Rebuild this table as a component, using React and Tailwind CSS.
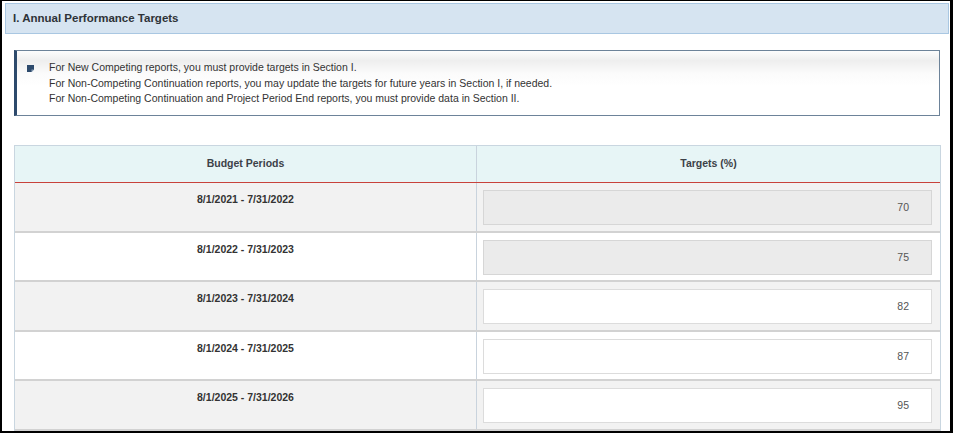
import React from 'react';

const rows = [
  { period: '8/1/2021 - 7/31/2022', target: '70', locked: true, shaded: true, h: 'h-[50px]' },
  { period: '8/1/2022 - 7/31/2023', target: '75', locked: true, shaded: false, h: 'h-[49px]' },
  { period: '8/1/2023 - 7/31/2024', target: '82', locked: false, shaded: true, h: 'h-[50px]' },
  { period: '8/1/2024 - 7/31/2025', target: '87', locked: false, shaded: false, h: 'h-[49px]' },
  { period: '8/1/2025 - 7/31/2026', target: '95', locked: false, shaded: true, h: 'h-[50px]' }
];

const notes = [
  'For New Competing reports, you must provide targets in Section I.',
  'For Non-Competing Continuation reports, you may update the targets for future years in Section I, if needed.',
  'For Non-Competing Continuation and Project Period End reports, you must provide data in Section II.'
];

const NoteIcon = () => (
  <svg width="7" height="7" viewBox="0 0 7 7" className="mt-[5px] shrink-0">
    <path d="M0 0H7V4.5L4.5 7H0Z" fill="#2d4a6c" />
    <path d="M4.5 7V4.5H7Z" fill="#8ea3ba" />
  </svg>
);

export default function App() {
  return (
    <div
      className="w-[953px] h-[433px] overflow-hidden bg-white border-black border-l-2 border-t border-r-[3px] border-b-2 pl-[3px] pt-[2px] pr-[1px]"
      style={{ fontFamily: '"Liberation Sans", Arial, sans-serif' }}
    >
      {/* Section header */}
      <div className="h-[31px] flex items-center bg-[#d6e4f1] border border-[#a9c7e2] pl-[7px]">
        <span className="text-[11.5px] font-bold text-[#2e3338]">I. Annual Performance Targets</span>
      </div>

      <div className="pl-[9px] pr-[8px]">
        {/* Instructions */}
        <div className="mt-[16px] mr-[1px] h-[66px] border border-[#6d8399] border-l-[3px] border-l-[#2d4a6c] bg-[linear-gradient(to_bottom,#fdfdfd_0%,#eeeeee_15%,#fbfbfb_35%,#ffffff_55%)] pl-[10px] pt-[9px] flex">
          <NoteIcon />
          <div className="ml-[15px] text-[10.5px] leading-[15.5px] text-[#333]">
            {notes.map((n) => (
              <div key={n}>{n}</div>
            ))}
          </div>
        </div>

        {/* Targets table */}
        <div className="mt-[29px] border-l border-r border-t border-[#c9d6e0]">
          <div className="flex h-[37px] bg-[#e7f5f6] border-b border-[#c8423b] text-[10.5px] font-bold text-[#3c4148]">
            <div className="w-[462px] flex items-center justify-center border-r border-[#c9d3dd]">Budget Periods</div>
            <div className="flex-1 flex items-center justify-center">Targets (%)</div>
          </div>

          {rows.map((r) => (
            <div
              key={r.period}
              className={`flex ${r.h} border-b-2 border-[#d2d2d2] ${r.shaded ? 'bg-[#f2f2f2]' : 'bg-white'}`}
            >
              <div className="w-[462px] border-r border-[#c9d3dd] pt-[9px] text-center text-[10.5px] font-bold text-[#333]">
                {r.period}
              </div>
              <div className="flex-1 pl-[6px] pr-[8px] pt-[7px]">
                <div
                  className={`h-[35px] flex items-center justify-end pr-[22px] text-[10.5px] text-[#555] border ${
                    r.locked ? 'bg-[#ebebeb] border-[#d6d6d6]' : 'bg-white border-[#dcdcdc]'
                  }`}
                >
                  {r.target}
                </div>
              </div>
            </div>
          ))}
        </div>
      </div>
    </div>
  );
}
